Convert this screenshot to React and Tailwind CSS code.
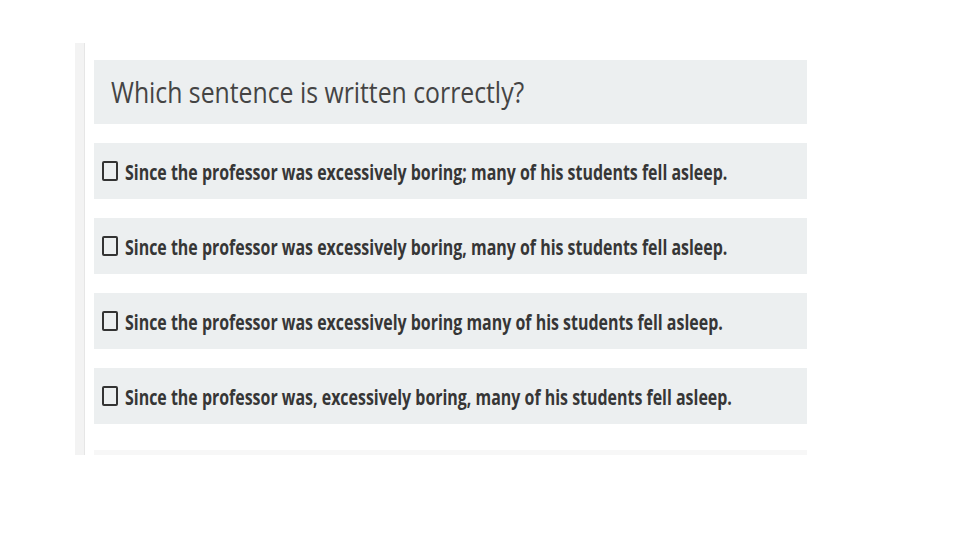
import React from "react";

const options = [
  "Since the professor was excessively boring; many of his students fell asleep.",
  "Since the professor was excessively boring, many of his students fell asleep.",
  "Since the professor was excessively boring many of his students fell asleep.",
  "Since the professor was, excessively boring, many of his students fell asleep.",
];

const App = () => {
  return (
    <div className="w-[960px] h-[540px] bg-white overflow-hidden" style={{ fontFamily: '"Open Sans", sans-serif' }}>
      <div className="ml-[75px] mt-[43px] h-[412px] flex overflow-hidden">
        {/* left rail of the original page */}
        <div className="w-[10px] bg-[#f3f3f3] border-r border-[#e6e6e6]" />
        <div className="ml-[9px] pt-[17px] w-[713px] flex flex-col gap-[19px]">
          <div className="h-[64px] shrink-0 bg-[#eceff0] flex items-center pl-[17px]">
            <span className="inline-block whitespace-nowrap origin-left scale-x-[0.826] text-[30px] text-[#444] leading-none">
              Which sentence is written correctly?
            </span>
          </div>
          {options.map((opt, i) => (
            <div key={i} className="h-[56px] shrink-0 bg-[#eceff0] flex items-center pl-[8px]">
              <div className="w-[16px] h-[20px] border-2 border-[#333] rounded-[2px] shrink-0" />
              <span className="ml-[7px] inline-block whitespace-nowrap origin-left scale-x-[0.725] text-[22px] font-bold text-[#363636] leading-none">
                {opt}
              </span>
            </div>
          ))}
          <div className="h-[56px] shrink-0 bg-[#f7f7f7] mt-[7px]" />
        </div>
      </div>
    </div>
  );
};

export default App;
